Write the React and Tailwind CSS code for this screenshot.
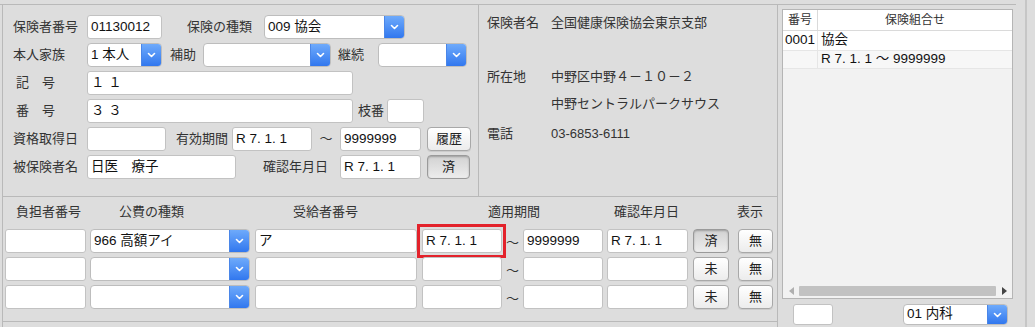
import React from 'react';

function Chevron() {
  return (
    <svg width="9" height="6" viewBox="0 0 9 6" fill="none">
      <path d="M1.5 1.5L4.5 4.5L7.5 1.5" stroke="white" strokeWidth="1.6" strokeLinecap="round" strokeLinejoin="round" />
    </svg>
  );
}

function Input({ w, value = '', h = 'h-[24px]' }) {
  return (
    <div className={`${w} ${h} shrink-0 flex items-center rounded-[3px] border border-[#c2c2c2] bg-white pl-[3px] text-[13.5px] text-[#111] whitespace-nowrap overflow-hidden`}>
      {value}
    </div>
  );
}

function Select({ w, value = '', h = 'h-[24px]' }) {
  return (
    <div className={`${w} ${h} shrink-0 flex rounded-[4px] border border-[#bdbdbd] bg-white overflow-hidden`}>
      <div className="flex-1 flex items-center pl-[3px] text-[13.5px] text-[#111] whitespace-nowrap">{value}</div>
      <div className="w-[20px] flex items-center justify-center bg-linear-to-b from-[#6eaafb] to-[#3177ee] border-l border-[#4a86e8]">
        <Chevron />
      </div>
    </div>
  );
}

function Button({ w, label, pressed = false, h = 'h-[24px]' }) {
  return (
    <div
      className={`${w} ${h} shrink-0 flex items-center justify-center rounded-[4px] border text-[13px] text-[#222] ${
        pressed
          ? 'border-[#9a9a9a] bg-linear-to-b from-[#d2d2d2] to-[#ededed] shadow-[inset_0_1px_2px_rgba(0,0,0,0.25)]'
          : 'border-[#a8a8a8] bg-linear-to-b from-[#ffffff] to-[#ececec] shadow-[0_1px_0_rgba(0,0,0,0.08)]'
      }`}
    >
      {label}
    </div>
  );
}

function Label({ w, children, className = '' }) {
  return <div className={`${w} shrink-0 text-[13px] text-[#333] whitespace-nowrap ${className}`}>{children}</div>;
}

function InsurerForm() {
  return (
    <div className="w-[476px] shrink-0 border-r border-[#b9b9b9] pt-[10px] pl-[10px] flex flex-col gap-[4px]">
      <div className="flex items-center">
        <Label w="w-[74px]">保険者番号</Label>
        <Input w="w-[75px]" value="01130012" />
        <Label w="w-[77px]" className="ml-[25px]">保険の種類</Label>
        <Select w="w-[141px]" value="009 協会" />
      </div>
      <div className="flex items-center">
        <Label w="w-[74px]">本人家族</Label>
        <Select w="w-[75px]" value="1 本人" />
        <Label w="w-[33px]" className="ml-[8px]">補助</Label>
        <Select w="w-[128px]" />
        <Label w="w-[40px]" className="ml-[7px]">継続</Label>
        <Select w="w-[89px]" />
      </div>
      <div className="flex items-center">
        <Label w="w-[74px]" className="pl-[3px]">記　号</Label>
        <Input w="w-[266px]" value="１ １" />
      </div>
      <div className="flex items-center">
        <Label w="w-[74px]" className="pl-[3px]">番　号</Label>
        <Input w="w-[266px]" value="３ ３" />
        <Label w="w-[29px]" className="ml-[5px]">枝番</Label>
        <Input w="w-[37px]" />
      </div>
      <div className="flex items-center">
        <Label w="w-[74px]">資格取得日</Label>
        <Input w="w-[79px]" />
        <Label w="w-[56px]" className="ml-[10px]">有効期間</Label>
        <Input w="w-[80px]" value="R 7. 1. 1" />
        <div className="w-[28px] shrink-0 text-center text-[13px] text-[#333]">～</div>
        <Input w="w-[81px]" value="9999999" />
        <div className="ml-[6px]">
          <Button w="w-[44px]" label="履歴" />
        </div>
      </div>
      <div className="flex items-center">
        <Label w="w-[74px]">被保険者名</Label>
        <Input w="w-[149px]" value="日医　療子" />
        <Label w="w-[77px]" className="ml-[27px]">確認年月日</Label>
        <Input w="w-[81px]" value="R 7. 1. 1" />
        <div className="ml-[6px]">
          <Button w="w-[43px]" label="済" pressed />
        </div>
      </div>
    </div>
  );
}

function InsurerInfo() {
  const rows = [
    { label: '保険者名', value: '全国健康保険協会東京支部', mt: 'mt-[8px]' },
    { label: '所在地', value: '中野区中野４－１０－２', mt: 'mt-[35px]' },
    { label: '', value: '中野セントラルパークサウス', mt: 'mt-[8px]' },
    { label: '電話', value: '03-6853-6111', mt: 'mt-[11px]' },
  ];
  return (
    <div className="flex-1 pl-[8px]">
      {rows.map((r, i) => (
        <div key={i} className={`flex h-[19px] items-center text-[13px] text-[#333] ${r.mt}`}>
          <div className="w-[64px] shrink-0">{r.label}</div>
          <div>{r.value}</div>
        </div>
      ))}
    </div>
  );
}

function PublicExpenseRow({ first = false }) {
  return (
    <div className="flex items-center">
      <Input w="w-[81px]" />
      <div className="ml-[4px]">
        <Select w="w-[160px]" value={first ? '966 高額アイ' : ''} />
      </div>
      <div className="ml-[5px]">
        <Input w="w-[162px]" value={first ? 'ア' : ''} />
      </div>
      <div className="ml-[5px] relative">
        <Input w="w-[80px]" value={first ? 'R 7. 1. 1' : ''} />
        {first && <div className="absolute -top-[5px] -bottom-[5px] -left-[5px] -right-[4px] border-[3px] border-[#e3222b]" />}
      </div>
      <div className="w-[21px] shrink-0 text-center text-[13px] text-[#333] pt-[4px]">～</div>
      <Input w="w-[80px]" value={first ? '9999999' : ''} />
      <div className="ml-[4px]">
        <Input w="w-[81px]" value={first ? 'R 7. 1. 1' : ''} />
      </div>
      <div className="ml-[5px]">
        <Button w="w-[36px]" label={first ? '済' : '未'} pressed={first} />
      </div>
      <div className="ml-[9px]">
        <Button w="w-[35px]" label="無" />
      </div>
    </div>
  );
}

function PublicExpense() {
  return (
    <div className="h-[125px] border-b border-[#b9b9b9] pl-[2px] pt-[5px]">
      <div className="flex h-[19px] items-center text-[13px] text-[#333] whitespace-nowrap">
        <span className="ml-[11px]">負担者番号</span>
        <span className="ml-[38px]">公費の種類</span>
        <span className="ml-[109px]">受給者番号</span>
        <span className="ml-[130px]">適用期間</span>
        <span className="ml-[74px]">確認年月日</span>
        <span className="ml-[58px]">表示</span>
      </div>
      <div className="mt-[8px] flex flex-col gap-[4px]">
        <PublicExpenseRow first />
        <PublicExpenseRow />
        <PublicExpenseRow />
      </div>
    </div>
  );
}

function ComboPanel() {
  return (
    <div className="ml-[4px] mt-[4px] flex flex-col">
      <div className="w-[231px] h-[290px] border border-[#b5b5b5] bg-[#f2f2f2] flex flex-col">
        <div className="flex h-[21px] bg-white border-b border-[#dadada] text-[12px] text-[#333]">
          <div className="w-[35px] shrink-0 border-r border-[#dadada] flex items-center justify-center">番号</div>
          <div className="flex-1 flex items-center justify-center">保険組合せ</div>
        </div>
        <div className="flex h-[20px] bg-white border-b border-[#e6e6e6] text-[13.5px] text-[#111]">
          <div className="w-[35px] shrink-0 border-r border-[#e6e6e6] flex items-center pl-[2px]">0001</div>
          <div className="flex-1 flex items-center pl-[3px]">協会</div>
        </div>
        <div className="flex h-[18px] bg-[#f7f7f7] border-b border-[#e6e6e6] text-[13.5px] text-[#111]">
          <div className="w-[35px] shrink-0 border-r border-[#e6e6e6]" />
          <div className="flex-1 flex items-center pl-[3px]">R 7. 1. 1 ～ 9999999</div>
        </div>
        <div className="flex-1" />
        <div className="h-[13px] mb-[1px] flex items-center">
          <div className="w-[16px] flex justify-center">
            <svg width="5" height="8" viewBox="0 0 5 8"><path d="M5 0L0 4L5 8Z" fill="#b0b0b0" /></svg>
          </div>
          <div className="flex-1 h-[10px] bg-[#c2c2c2] rounded-[1px]" />
          <div className="w-[16px] flex justify-center">
            <svg width="5" height="8" viewBox="0 0 5 8"><path d="M0 0L5 4L0 8Z" fill="#444" /></svg>
          </div>
        </div>
      </div>
      <div className="mt-[5px] flex items-center">
        <div className="ml-[11px]">
          <Input w="w-[40px]" h="h-[21px]" />
        </div>
        <div className="ml-[70px]">
          <Select w="w-[105px]" h="h-[21px]" value="01 内科" />
        </div>
      </div>
    </div>
  );
}

export default function App() {
  return (
    <div className="w-[1035px] h-[327px] overflow-hidden bg-[#dddddd] font-['Liberation_Sans','Noto_Sans_CJK_JP',sans-serif] flex">
      <div className="mt-[4px] w-[1016px] shrink-0 border-t border-[#b9b9b9] flex">
        <div className="ml-[2px] w-[776px] shrink-0 border-l border-r border-[#b9b9b9] flex flex-col">
          <div className="flex h-[192px] border-b border-[#b9b9b9]">
            <InsurerForm />
            <InsurerInfo />
          </div>
          <PublicExpense />
        </div>
        <ComboPanel />
      </div>
      <div className="ml-[9px] w-[2px] h-full bg-[#c6c6c6]" />
    </div>
  );
}
